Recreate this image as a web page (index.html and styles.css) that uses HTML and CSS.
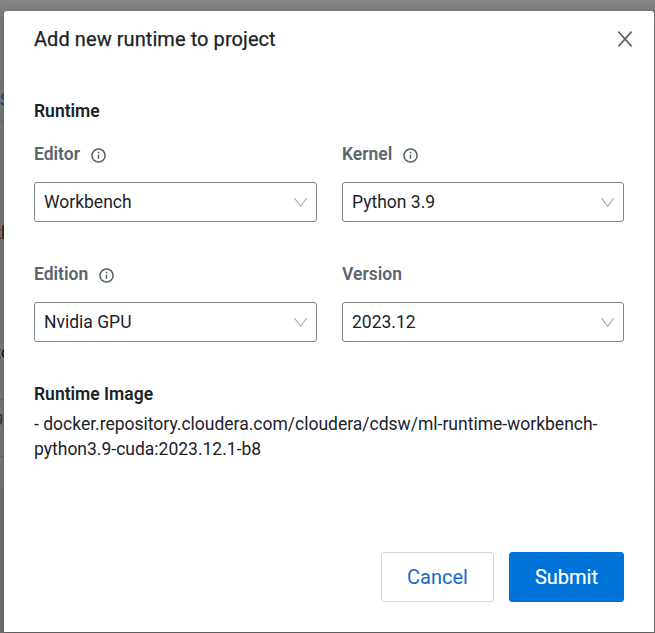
FILE: index.html
```html
<!DOCTYPE html>
<html lang="en">
<head>
<meta charset="utf-8">
<title>Add new runtime to project</title>
<link rel="stylesheet" href="styles.css">
</head>
<body>
<svg class="defs" aria-hidden="true">
  <symbol id="info" viewBox="0 0 16 16"><circle cx="8" cy="8" r="7" fill="none" stroke="currentColor" stroke-width="1.6"/><path d="M8 7v4.5" stroke="currentColor" stroke-width="1.5"/><circle cx="8" cy="4.9" r=".95" fill="currentColor"/></symbol>
  <symbol id="chevron" viewBox="0 0 14 12"><path d="M.6 1.2 6.6 9.5 12.6 1.2" fill="none" stroke="currentColor" stroke-width="1.2"/></symbol>
</svg>
<div class="backdrop" aria-hidden="true">
  <span class="peek peek-link">S</span>
  <span class="peek peek-path">th</span>
  <span class="peek peek-text">to</span>
  <span class="peek peek-small">g</span>
  <i class="rule rule-a"></i><i class="rule rule-b"></i><i class="rule rule-c"></i>
</div>
<main class="modal">
  <header class="modal-header">
    <h1 class="title">Add new runtime to project</h1>
    <svg class="close" viewBox="0 0 16 16"><path d="M1.4.6 14.6 15.4M14.6.6 1.4 15.4" fill="none" stroke="currentColor" stroke-width="1.7"/></svg>
  </header>
  <section class="body">
    <h2 class="heading">Runtime</h2>
    <div class="fields">
      <div class="field">
        <div class="label">Editor<svg class="info"><use href="#info"/></svg></div>
        <div class="select">Workbench<svg class="chevron"><use href="#chevron"/></svg></div>
      </div>
      <div class="field">
        <div class="label">Kernel<svg class="info"><use href="#info"/></svg></div>
        <div class="select">Python 3.9<svg class="chevron"><use href="#chevron"/></svg></div>
      </div>
      <div class="field">
        <div class="label">Edition<svg class="info"><use href="#info"/></svg></div>
        <div class="select">Nvidia GPU<svg class="chevron"><use href="#chevron"/></svg></div>
      </div>
      <div class="field">
        <div class="label">Version</div>
        <div class="select">2023.12<svg class="chevron"><use href="#chevron"/></svg></div>
      </div>
    </div>
    <h2 class="heading image-heading">Runtime Image</h2>
    <p class="image">- docker.repository.cloudera.com/cloudera/cdsw/ml-runtime-workbench-<br>python3.9-cuda:2023.12.1-b8</p>
  </section>
  <footer class="actions">
    <button class="button">Cancel</button>
    <button class="button primary">Submit</button>
  </footer>
</main>
</body>
</html>
```
FILE: styles.css
```css
* { box-sizing: border-box; }
body {
  margin: 0;
  height: 633px;
  padding: 11px 1px 1px 4px;
  overflow: hidden;
  position: relative;
  background: #757575;
  font-family: Roboto, "Liberation Sans", sans-serif;
  font-size: 17.5px;
  line-height: 25px;
  color: #1b2329;
}
.defs { position: absolute; width: 0; height: 0; }
.backdrop {
  position: absolute;
  inset: 0;
  overflow: hidden;
  background: linear-gradient(#858785, #7c7d7c 11px, #7b7a79 120px, #7b7a79 487px, #737373 488px);
}
.peek { position: absolute; width: 40px; text-align: right; left: -29px; }
.peek-link { top: 87px; color: #174c88; font-size: 19px; }
.peek-path { top: 221px; left: -29px; color: #4a2410; font-weight: 500; }
.peek-text { top: 340px; left: -30px; color: #111; font-size: 16px; }
.peek-small { top: 405px; left: -37px; color: #30363a; font-size: 15px; }
.rule { position: absolute; left: 0; width: 4px; height: 1px; background: #6a6a6a; }
.rule-a { top: 121px; }
.rule-b { top: 399px; }
.rule-c { top: 456px; }
.modal {
  position: relative;
  display: flex;
  flex-direction: column;
  height: 621px;
  padding: 15px 30px 30px;
  background: #fff;
  border-radius: 3px 3px 0 0;
  box-shadow: 0 3px 9px rgba(0, 0, 0, .25);
}
.modal-header { display: flex; justify-content: space-between; align-items: center; height: 26px; }
.title { margin: 0; font-size: 20px; font-weight: 400; letter-spacing: .07px; -webkit-text-stroke: .25px; }
.close { width: 16px; height: 16px; margin-right: -9px; color: #5a656d; }
.body { flex: 1; padding-top: 47px; }
.heading { margin: 0; font-size: 17.5px; font-weight: 600; line-height: 25px; }
.fields {
  display: grid;
  grid-template-columns: 283px 282px;
  column-gap: 25px;
  row-gap: 40px;
  margin-top: 18px;
}
.label { display: flex; align-items: center; height: 25px; margin-bottom: 15px; font-weight: 600; color: #5a656d; }
.info { width: 15px; height: 15px; margin: 2px 0 0 11px; }
.select {
  display: flex;
  align-items: center;
  justify-content: space-between;
  height: 40px;
  padding: 0 8px 0 9px;
  border: 1px solid #7d868c;
  border-radius: 3px;
}
.chevron { width: 14px; height: 12px; margin-top: 1px; color: #aeb2b5; }
.image-heading { margin-top: 40px; }
.image { margin: 5px 0 0; white-space: nowrap; }
.actions { display: flex; justify-content: flex-end; gap: 15px; }
.button {
  width: 113px;
  height: 50px;
  padding: 0;
  border: 1px solid #d5d7d8;
  border-radius: 3px;
  background: #fff;
  color: #176bc8;
  font: 400 20px/25px Roboto, "Liberation Sans", sans-serif;
}
.primary { width: 115px; border-color: #0073d8; background: #0073d8; color: #fff; -webkit-text-stroke: .2px; }
```
